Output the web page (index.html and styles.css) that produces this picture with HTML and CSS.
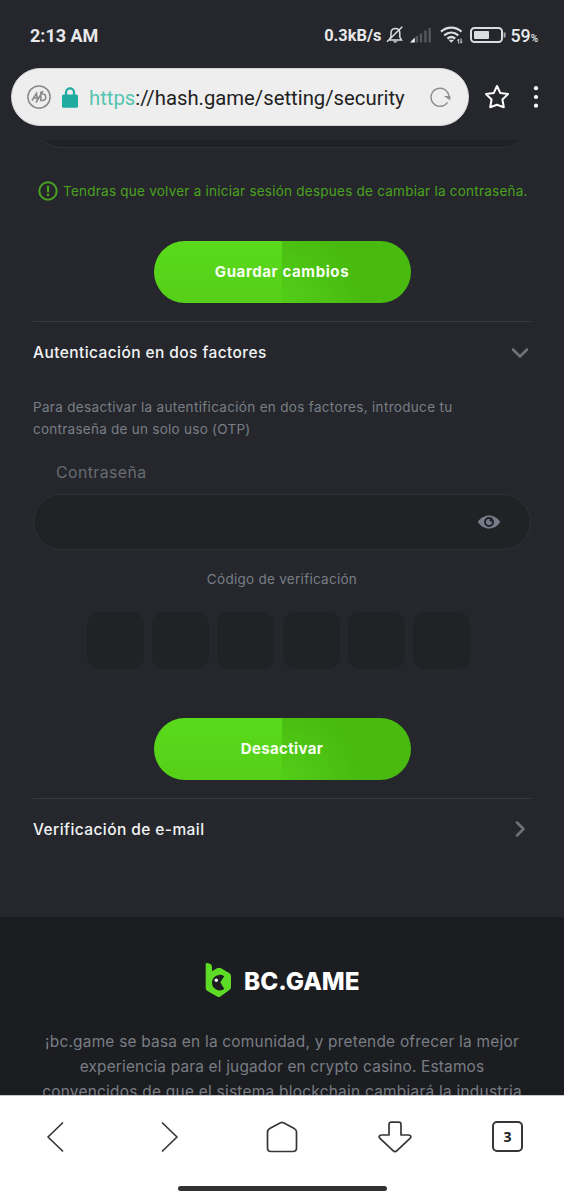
FILE: index.html
```html
<!DOCTYPE html>
<html lang="es">
<head>
<meta charset="utf-8">
<title>Seguridad</title>
<link rel="stylesheet" href="styles.css">
</head>
<body>
<div class="screen">
  <header class="top">
    <div class="status">
      <span class="time">2:13 AM</span>
      <div class="indicators">
        <span class="speed">0.3kB/s</span>
        <svg class="bell" width="18" height="18" viewBox="0 0 18 18" fill="none" stroke="#dcdde0" stroke-width="1.5"><path d="M3 14h12.5L13.8 11V7.2C13.8 4 12 2.4 9.4 2.4S5 4 5 7.2v3.5zM16.3.8 1 15.8"/><path d="M7 15.3c.8 1.8 3.8 1.8 4.6 0z" fill="#dcdde0" stroke="none"/></svg>
        <svg class="signal" width="22" height="16" viewBox="0 0 22 16" fill="#55575b"><path d="M0 15.500 4.800 10.500v5z" fill="#f1f1f2"/><path d="M5.700 9h2.400v6.500H5.700zM9.800 6.500h2.400v9H9.800zM14.200 3.500h2.400v12h-2.400zM18.500 1h2.400v14.500h-2.400z"/></svg>
        <svg class="wifi" width="24" height="20" viewBox="0 0 24 20" fill="none" stroke="#dcdde0" stroke-width="2.200"><path d="M1 6.600c6-5.300 14.500-5.300 20.500 0M4.200 10.300c4.300-3.700 9.800-3.700 14.100 0M7.400 13.700c2.400-2.100 5.400-2.100 7.800 0"/><path d="M8.500 14.700h5.600l-2.800 3z" fill="#dcdde0" stroke="none"/><path d="M18.700 18.500v-4.500l-1.300 1.600M21 13.500v4.700l1.300-1.600" stroke-width="1"/></svg>
        <svg class="battery" width="36" height="18" viewBox="0 0 36 18"><rect x="1" y="2" width="31" height="14" rx="3.500" fill="none" stroke="#dcdde0" stroke-width="2"/><rect x="4" y="5" width="15" height="8" rx="1" fill="#dcdde0"/><path d="M33.600 6.500h2v5h-2z" fill="#a5a6aa"/></svg>
        <span class="level">59<small>%</small></span>
      </div>
    </div>
    <div class="address-row">
      <div class="address">
        <svg class="adblock" width="24" height="24" viewBox="0 0 24 24" fill="none" stroke="#888a8b" stroke-width="1.600"><circle cx="12" cy="12" r="11.100" stroke-width="1.500"/><path d="M5 15.500 9.500 8.500 10.500 15M7 13h3.500M9 17.500 16 6M13.800 6.500v9h1.400c4.800 0 4.800-6.500 0-6.500"/></svg>
        <svg class="lock" width="16" height="21" viewBox="0 0 16 21"><path d="M4 9V5.300a4 4 0 0 1 8 0V9" fill="none" stroke="#20aba1" stroke-width="2.200"/><rect x="0" y="7.500" width="16" height="13.300" rx="1.600" fill="#20aba1"/></svg>
        <span class="url"><span class="scheme">https</span>://hash.game/setting/security</span>
        <svg class="reload" width="22" height="22" viewBox="0 0 22 22"><path d="M17.500 16.300A9 9 0 1 1 19 10.500" fill="none" stroke="#8b8d8e" stroke-width="1.400"/><path d="M14 10h6.300v4.500z" fill="#8b8d8e"/></svg>
      </div>
      <svg class="star" width="26" height="26" viewBox="0 0 26 26" fill="none" stroke="#fff" stroke-width="2" stroke-linejoin="round"><path d="m13 2 3.300 7.100 7.700 1-5.600 5.400 1.400 7.700-6.800-2.400-6.800 2.400 1.400-7.700L2 10.100l7.700-1z"/></svg>
      <svg class="more" width="6" height="24" viewBox="0 0 6 24" fill="#fff"><circle cx="3" cy="3.200" r="2.100"/><circle cx="3" cy="12" r="2.100"/><circle cx="3" cy="20.700" r="2.100"/></svg>
    </div>
  </header>

  <main class="page">
    <div class="clipped"><div class="field"></div></div>
    <p class="notice">
      <svg width="20" height="20" viewBox="0 0 20 20" fill="none" stroke="#4aa31e" stroke-width="2"><circle cx="10" cy="10" r="8.700"/><path d="M10 4.800v6.400M10 12.800v2.200" stroke-width="2.200"/></svg>
      <span>Tendras que volver a iniciar sesión despues de cambiar la contraseña.</span>
    </p>
    <button class="button"><span class="save">Guardar cambios</span></button>

    <section class="panel two-factor">
      <div class="panel-head"><h2 class="t-auth">Autenticación en dos factores</h2>
        <svg width="20" height="14" viewBox="0 0 20 14" fill="none" stroke="#6e7179" stroke-width="2.600" stroke-linecap="round" stroke-linejoin="round"><path d="m3 3.500 7 7 7-7"/></svg>
      </div>
      <p class="help"><span class="help-a">Para desactivar la autentificación en dos factores, introduce tu</span><br><span class="help-b">contraseña de un solo uso (OTP)</span></p>
      <div class="label"><span>Contraseña</span></div>
      <div class="field">
        <svg width="24" height="16" viewBox="0 0 24 16"><path d="M.8 8C6-.7 18-.7 23.200 8 18 16.700 6 16.700.8 8z" fill="#777c88"/><circle cx="12" cy="8" r="4" fill="#777c88" stroke="#1f2229" stroke-width="2"/><circle cx="14" cy="6.200" r="1.400" fill="#1f2229"/></svg>
      </div>
      <div class="code-label"><span>Código de verificación</span></div>
      <div class="codes"><i></i><i></i><i></i><i></i><i></i><i></i></div>
      <button class="button"><span class="disable">Desactivar</span></button>
    </section>

    <section class="panel email">
      <div class="panel-head"><h2 class="t-mail">Verificación de e-mail</h2>
        <svg width="20" height="20" viewBox="0 0 20 20" fill="none" stroke="#6e7179" stroke-width="2.600" stroke-linecap="round" stroke-linejoin="round"><path d="m7 3.500 6.500 6.500L7 16.500"/></svg>
      </div>
    </section>

    <footer class="footer">
      <div class="logo">
        <svg width="27" height="35" viewBox="0 0 27 35"><path d="M1.500 0 4.500.6Q7 1.300 7 4v4.200L12 5.300Q14 4.300 16 5.300l8.500 5Q26 11.300 26 13.200v11q0 1.800-1.600 2.800l-9 6.500q-1.700 1-3.400 0L2.500 28Q.7 27 .7 25V.8Q.7 0 1.500 0z" fill="#5ddb25"/><path d="M19.300 13.300A7.800 7.800 0 1 0 19.300 26L15.300 19.300z" fill="#1c1d21"/><circle cx="11.300" cy="17.300" r="1.700" fill="#fff"/></svg>
        <span class="brand">BC.GAME</span>
      </div>
      <p class="about"><span class="about-a">¡bc.game se basa en la comunidad, y pretende ofrecer la mejor</span><br><span class="about-b">experiencia para el jugador en crypto casino. Estamos</span><br><span class="about-c">convencidos de que el sistema blockchain cambiará la industria</span></p>
    </footer>
  </main>

  <nav class="bottom">
    <div class="tools">
      <svg width="32" height="32" viewBox="0 0 32 32"><path d="M22.500 2 8 16l14.500 14"/></svg>
      <svg width="32" height="32" viewBox="0 0 32 32"><path d="m9.500 2 14.500 14L9.500 30"/></svg>
      <svg width="32" height="32" viewBox="0 0 32 32"><path d="M14.500 1.800q1.500-.7 3 0l10.300 5.500Q30.500 8.700 30.500 11v16q0 3.500-3.500 3.500H5q-3.500 0-3.500-3.500V11q0-2.300 2.700-3.700z"/></svg>
      <svg width="34" height="32" viewBox="0 0 34 32"><path d="M11 14V3.500Q11 1.200 13.300 1.200h7.400Q23 1.200 23 3.500V14h7.500c2.800 0 2.800 2 1.500 3.300L19 29.700q-2 2-4 0L2 17.300C.7 16 .7 14 3.500 14z"/></svg>
      <span class="tabs">3</span>
    </div>
    <div class="handle"></div>
  </nav>
</div>
</body>
</html>
```
FILE: styles.css
```css
* { box-sizing: border-box; }
body { margin: 0; background: #25272c; font-family: Inter, "Open Sans", sans-serif; }
svg { display: block; flex: none; }
p, h2 { margin: 0; }
.screen { width: 564px; height: 1200px; display: flex; flex-direction: column; overflow: hidden; background: #25272c; }
.top { height: 140px; flex: none; font-family: Roboto, sans-serif; }
.status { height: 68px; padding: 2px 26px 0 30px; display: flex; align-items: center; justify-content: space-between; color: #e8e9eb; }
.time { font-size: 18px; font-weight: 700; }
.indicators { display: flex; align-items: center; font-size: 17px; font-weight: 700; }
.speed { font-size: 16.400px; }
.bell { margin-left: 5px; }
.signal { margin-left: 6px; }
.wifi { margin-left: 8px; }
.battery { margin: 0 4px 0 6px; }
.level { font-size: 17.800px; font-weight: 500; }
.level small { font-size: 10px; }
.address-row { display: flex; align-items: center; padding-left: 11px; }
.address { width: 458px; height: 58px; border-radius: 29px; background: #eee; border: 1px solid #d2d2d3; display: flex; align-items: center; padding: 0 16px 0 15px; }
.lock { margin: 0 11px 0 11px; }
.url { font-size: 20.300px; color: #222; flex: 1; white-space: nowrap; padding-top: 1px; }
.scheme { color: #55c4b0; }
.star { margin-left: 15px; }
.more { margin-left: 23px; }

.page { height: 955px; flex: none; overflow: hidden; white-space: nowrap; }
.field { height: 56px; border: 1px solid #2f3136; border-radius: 28px; background: #212226; display: flex; align-items: center; justify-content: flex-end; padding-right: 29px; }
.clipped { height: 8px; margin: 0 33px; overflow: hidden; display: flex; align-items: flex-end; }
.clipped .field { flex: 1; }
.notice { margin-top: 32px; height: 22px; padding-left: 38px; display: flex; align-items: center; gap: 5px; font-size: 13.500px; letter-spacing: .24px; color: #4aa31e; }
.button { display: flex; align-items: center; justify-content: center; width: 257px; height: 62px; padding: 0 0 1px; margin: 39px auto 0; border: 0; border-radius: 31px; color: #f7fff2; font: 700 15px Inter, sans-serif; letter-spacing: .6px; background: radial-gradient(circle at 0 100%, #52ce18 0, #49bb10 75px) 128px 0 / 129px 62px no-repeat, linear-gradient(180deg, #5ada1c, #55cf17); }
.disable { letter-spacing: .35px; }
.panel { margin: 18px 33px 0; border-top: 1px solid #393b40; }
.panel-head { height: 61px; display: flex; align-items: center; justify-content: space-between; }
.panel-head h2 { font-size: 15.500px; font-weight: 500; letter-spacing: .42px; color: #f3f4f5; }
.panel-head svg { margin-right: 1px; }
.help { margin-top: 14px; font-size: 13.500px; line-height: 21.500px; letter-spacing: .32px; color: #797e87; }
.help-b { letter-spacing: .26px; }
.label { height: 24px; margin-top: 21px; padding-left: 23px; font-size: 15.800px; line-height: 24px; letter-spacing: .45px; color: #686c73; }
.two-factor .field { margin-top: 9px; }
.code-label { margin-top: 18px; height: 22px; line-height: 22px; text-align: center; font-size: 13.500px; letter-spacing: .28px; color: #797e87; }
.codes { margin: 22px 0 0 54px; display: grid; grid-template-columns: repeat(6, 57px); gap: 8.200px; }
.codes i { height: 57px; border-radius: 12px; background: #212226; }
.two-factor .button { margin-top: 49px; }
.email { height: 119px; }
.email .panel-head { height: 60px; }
.footer { height: 179px; background: #1c1d21; padding-top: 46px; }
.logo { display: flex; align-items: center; height: 35px; padding-left: 205px; gap: 12px; }
.brand { font-family: Inter, sans-serif; font-size: 24.300px; font-weight: 800; color: #fff; }
.about { margin-top: 31px; font-size: 15.400px; line-height: 25px; text-align: center; color: #797e85; }
.about-a { letter-spacing: .24px; }
.about-b { letter-spacing: .19px; }
.about-c { letter-spacing: .27px; }

.bottom { height: 105px; flex: none; background: #fff; border-top: 1px solid #c9c9cb; }
.tools { display: grid; grid-template-columns: repeat(5, 1fr); justify-items: center; align-items: center; height: 81px; }
.tools svg { fill: none; stroke: #363636; stroke-width: 1.700; stroke-linecap: round; stroke-linejoin: round; }
.tabs { width: 31px; height: 31px; border: 2px solid #363636; border-radius: 5px; display: flex; align-items: center; justify-content: center; color: #222; font: 700 14px "Open Sans", sans-serif; }
.handle { width: 209px; height: 5px; border-radius: 3px; background: #323232; margin: 9px auto 0; }
```
